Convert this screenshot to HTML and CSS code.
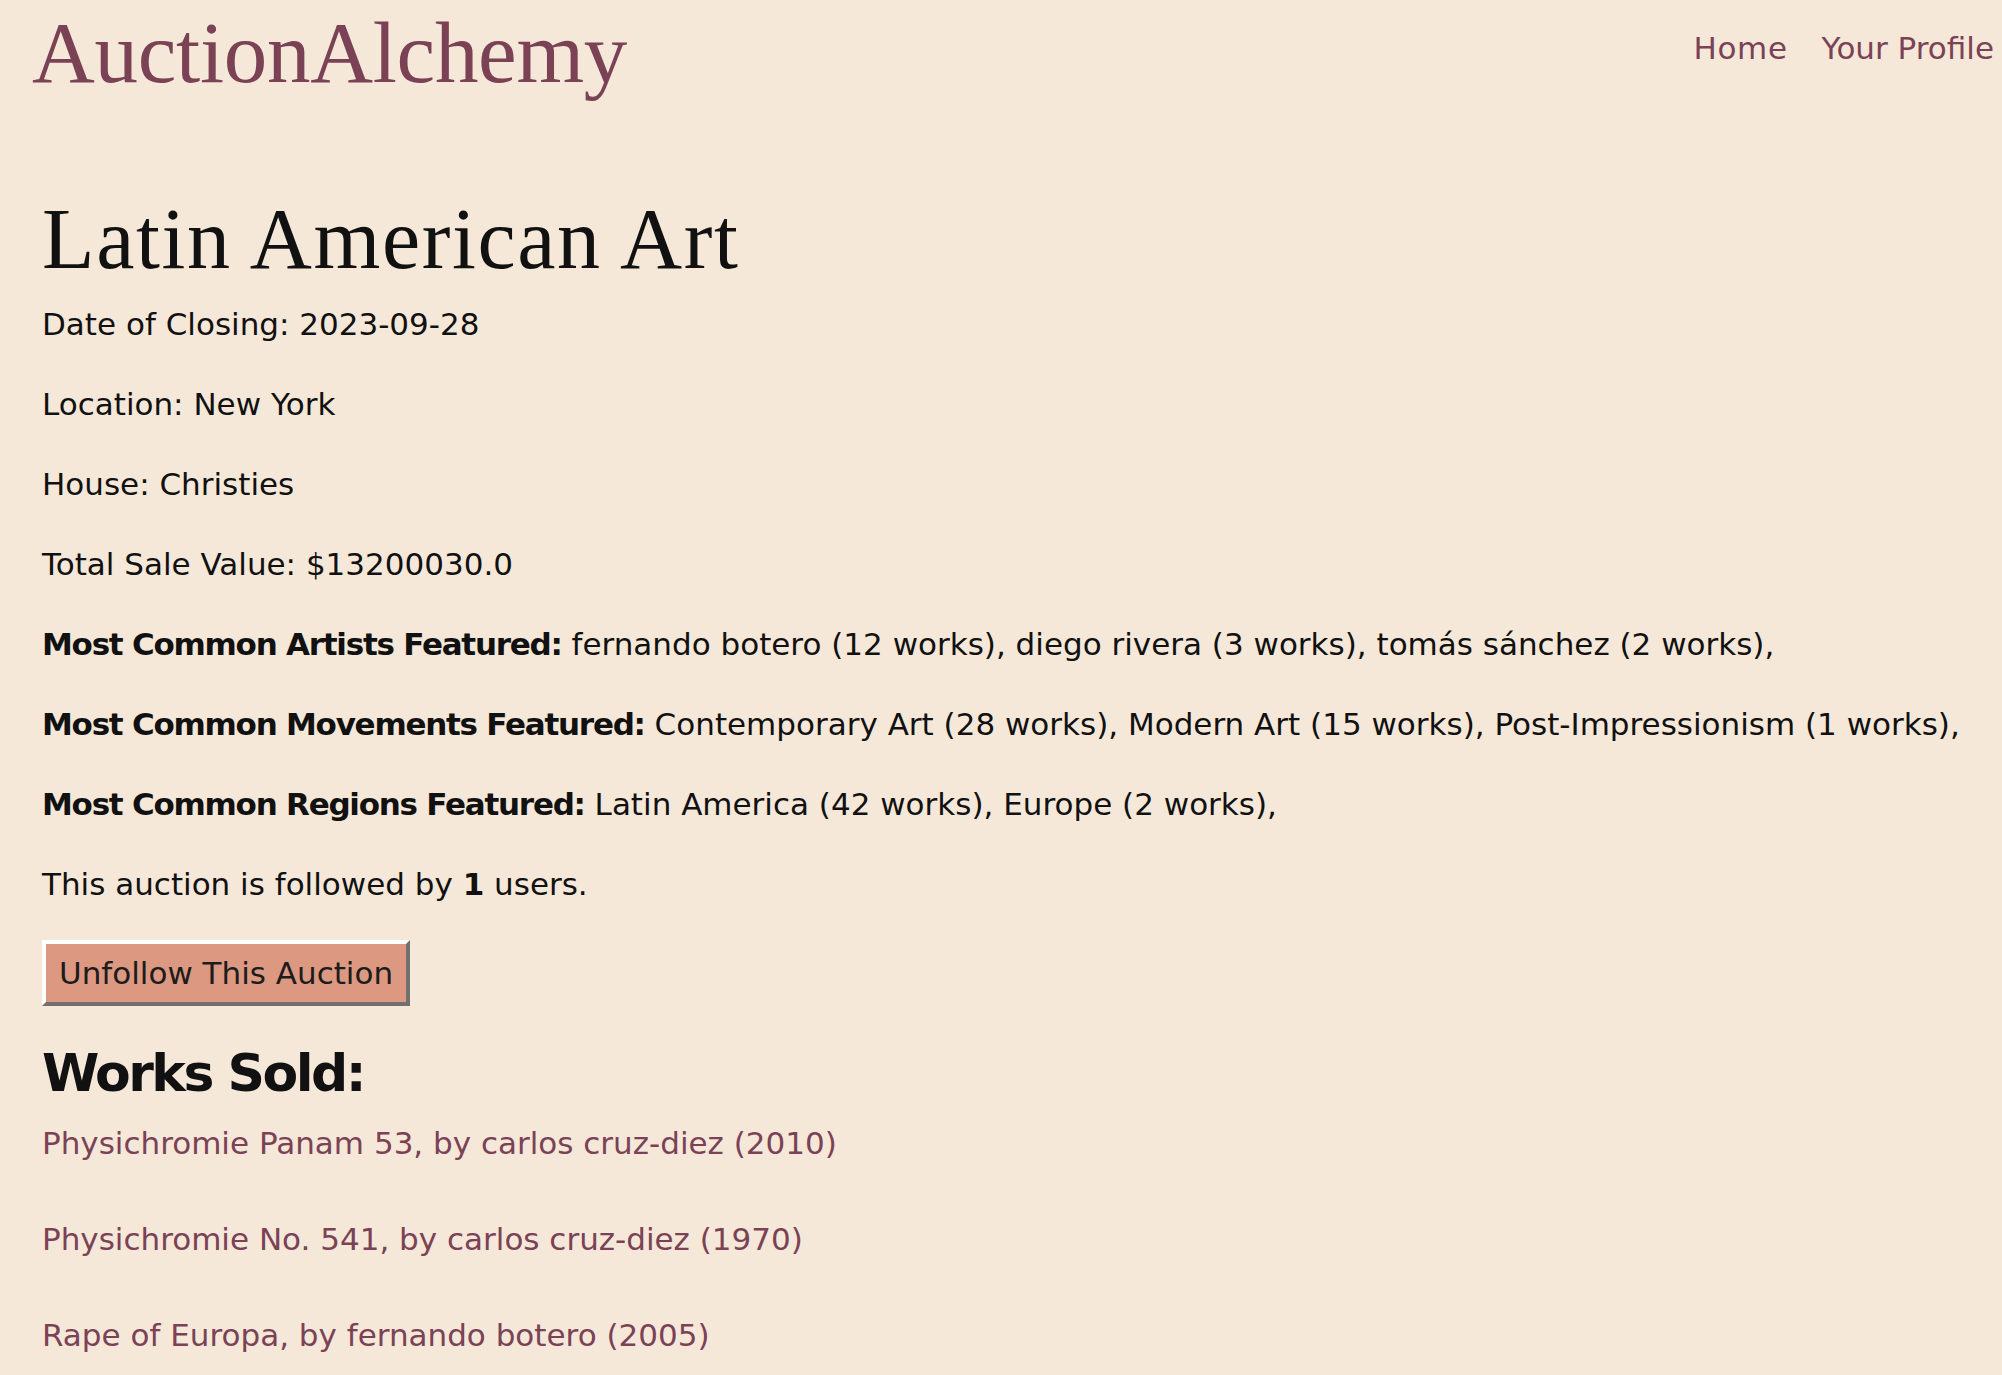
FILE: index.html
```html
<!DOCTYPE html>
<html lang="en">
<head>
<meta charset="utf-8">
<title>AuctionAlchemy - Latin American Art</title>
<link rel="stylesheet" href="styles.css">
</head>
<body>
<header class="site-header">
  <a class="logo" href="#">AuctionAlchemy</a>
  <nav class="nav">
    <a href="#">Home</a>
    <a href="#">Your Profile</a>
  </nav>
</header>
<main class="auction">
  <h1 class="title">Latin American Art</h1>
  <p class="info">Date of Closing: 2023-09-28</p>
  <p class="info">Location: New York</p>
  <p class="info">House: Christies</p>
  <p class="info">Total Sale Value: $13200030.0</p>
  <p class="info"><strong>Most Common Artists Featured:</strong> fernando botero (12 works), diego rivera (3 works), tomás sánchez (2 works),</p>
  <p class="info"><strong>Most Common Movements Featured:</strong> Contemporary Art (28 works), Modern Art (15 works), Post-Impressionism (1 works),</p>
  <p class="info"><strong>Most Common Regions Featured:</strong> Latin America (42 works), Europe (2 works),</p>
  <p class="info">This auction is followed by <strong class="count">1</strong> users.</p>
  <form class="follow-form">
    <button type="button" class="follow-btn">Unfollow This Auction</button>
  </form>
  <h2 class="works-title">Works Sold:</h2>
  <div class="works">
    <a href="#">Physichromie Panam 53, by carlos cruz-diez (2010)</a>
    <a href="#">Physichromie No. 541, by carlos cruz-diez (1970)</a>
    <a href="#">Rape of Europa, by fernando botero (2005)</a>
  </div>
</main>
</body>
</html>
```

FILE: styles.css
```css
html, body {
  margin: 0;
  padding: 0;
}

body {
  background: #f5e8d9;
  color: #111111;
  font-family: "DejaVu Sans", "Noto Sans", sans-serif;
  font-size: 31px;
  line-height: 48px;
  overflow: hidden;
}

a {
  color: #7b4256;
  text-decoration: none;
}

.site-header {
  display: flex;
  justify-content: space-between;
  align-items: flex-start;
  padding: 9px 8px 0 32px;
}

.logo {
  font-family: "Liberation Serif", "DejaVu Serif", serif;
  font-size: 87px;
  line-height: 88px;
  letter-spacing: -0.3px;
}

.nav {
  display: flex;
  gap: 34px;
  margin-top: 15px;
}

.nav a {
  font-size: 31px;
  line-height: 48px;
}

.nav a:first-child {
  letter-spacing: 0.6px;
}

.auction {
  padding: 0 42px;
}

.title {
  font-family: "Liberation Serif", "DejaVu Serif", serif;
  font-weight: normal;
  font-size: 86px;
  line-height: 86px;
  letter-spacing: 1.6px;
  margin: 99px 0 18px;
  color: #111111;
}

.info {
  margin: 0 0 32px;
  white-space: nowrap;
}

.info strong {
  font-weight: bold;
  letter-spacing: -1.25px;
}

.info strong.count {
  letter-spacing: 0;
}

.follow-form {
  margin: 33px 0 0;
}

.info + .follow-form {
  margin-top: 1px;
}

.follow-btn {
  font-family: "DejaVu Sans", "Noto Sans", sans-serif;
  font-size: 31px;
  line-height: 48px;
  color: #1c1c1c;
  background: #dc9880;
  border: 4px solid;
  border-color: #ffffff #707070 #707070 #ffffff;
  padding: 5px 13px;
  margin: 0;
  cursor: pointer;
}

.works-title {
  font-family: "DejaVu Sans", "Noto Sans", sans-serif;
  font-weight: bold;
  font-size: 52px;
  line-height: 64px;
  letter-spacing: -2.5px;
  margin: 35px 0 14px;
  color: #111111;
}

.works {
  display: flex;
  flex-direction: column;
  align-items: flex-start;
  gap: 48px;
}

.works a {
  line-height: 48px;
}
```
